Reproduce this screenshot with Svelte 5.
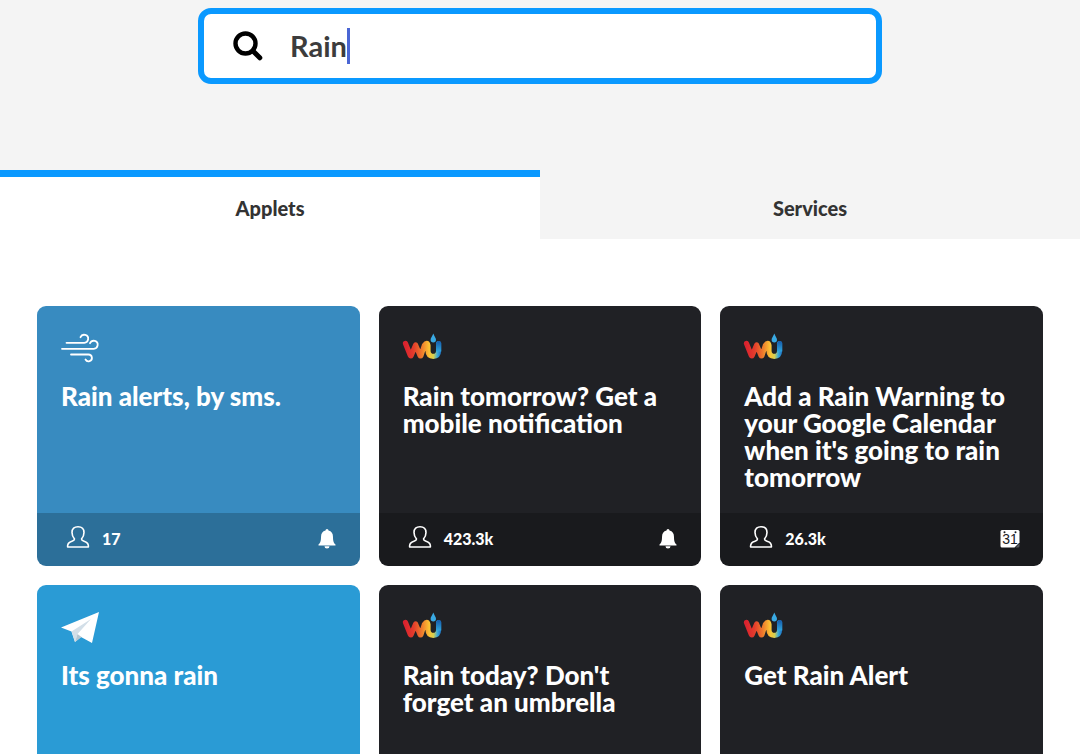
<script>
  let query = $state('Rain');
  let active = $state('Applets');
  const tabs = ['Applets', 'Services'];
  const applets = [
    { title: 'Rain alerts, by sms.', logo: 'wind', tone: 'steel', users: '17', action: 'bell' },
    { title: 'Rain tomorrow? Get a mobile notification', logo: 'wu', tone: 'dark', users: '423.3k', action: 'bell' },
    { title: "Add a Rain Warning to your Google Calendar when it's going to rain tomorrow", logo: 'wu', tone: 'dark', users: '26.3k', action: 'calendar' },
    { title: 'Its gonna rain', logo: 'plane', tone: 'sky' },
    { title: "Rain today? Don't forget an umbrella", logo: 'wu', tone: 'dark' },
    { title: 'Get Rain Alert', logo: 'wu', tone: 'dark' }
  ];
</script>

<header>
  <label class="search">
    <svg class="glass" viewBox="0 0 30 30" aria-hidden="true">
      <circle cx="12.5" cy="12.5" r="10" fill="none" stroke="#000" stroke-width="4.4" />
      <path d="M20 20l6.800 6.800" stroke="#000" stroke-width="5" stroke-linecap="round" />
    </svg>
    <input type="text" aria-label="Search" bind:value={query} />
    <span class="caret"></span>
  </label>
</header>

<nav>
  {#each tabs as tab}
    <button class:active={active === tab} onclick={() => (active = tab)}>{tab}</button>
  {/each}
</nav>

<main>
  {#each applets as applet, i}
    <article class={applet.tone}>
      <div class="body">
        {#if applet.logo === 'wind'}
          <svg class="logo" viewBox="0 0 39 28" fill="none" stroke="#fff" stroke-width="1.8" stroke-linecap="round" aria-hidden="true">
            <path d="M5.500 8.800H23a4 4 0 1 0-3.500-5.600" />
            <path d="M1 14.800H32.500a4 4 0 1 0-3.500-5.600" />
            <path d="M10 20.500H27.500a3.400 3.400 0 1 1-3 5" />
          </svg>
        {:else if applet.logo === 'plane'}
          <svg class="logo" viewBox="0 0 39 28" aria-hidden="true">
            <path d="M38 -1L0 14.500L10.500 18.500L14 29L20 24L31 30Z" fill="#fff" />
            <path d="M10.500 18.500L30 6L16.500 21L14 29Z" fill="#d3dfe8" />
            <path d="M16.500 21L20.500 24L14 29Z" fill="#b4c6d2" />
          </svg>
        {:else}
          <svg class="logo" viewBox="0 0 39 28" aria-hidden="true">
            <defs>
              <linearGradient id="warm{i}" gradientUnits="userSpaceOnUse" x1="1" y1="0" x2="38" y2="0">
                <stop offset="0" stop-color="#d9202f" />
                <stop offset=".25" stop-color="#e33b2c" />
                <stop offset=".48" stop-color="#ee7a2c" />
                <stop offset=".68" stop-color="#fbc234" />
                <stop offset=".8" stop-color="#d5cf50" />
                <stop offset=".9" stop-color="#3ba9d8" />
                <stop offset="1" stop-color="#1d72c4" />
              </linearGradient>
              <linearGradient id="cool{i}" x1="0" y1="0" x2="0" y2="1">
                <stop offset="0" stop-color="#1559a9" />
                <stop offset="1" stop-color="#2fa5dc" />
              </linearGradient>
            </defs>
            <path d="M2.500 9.500L7.300 21.500Q7.700 22.500 8.200 21.500L12.600 11L17 21.500Q17.500 22.500 18 21.500L21.300 11.500Q24.200 7 25 11.500V17Q25.200 22.300 30.300 22.300T35.600 17V9.500" fill="none" stroke="url(#warm{i})" stroke-width="5.200" stroke-linecap="round" stroke-linejoin="round" />
            <path d="M33 9.500a2.600 2.600 0 0 1 5.200 0v8h-5.200z" fill="url(#cool{i})" />
            <path d="M30.300 -.5C31.200 2.300 33 3.700 33 5.700a2.700 2.700 0 0 1-5.400 0C27.600 3.700 29.400 2.300 30.300 -.5Z" fill="#39a9e3" stroke="#202125" stroke-width="1.400" paint-order="stroke" />
          </svg>
        {/if}
        <h2>{applet.title}</h2>
      </div>
      <footer>
        {#if applet.users}
          <svg class="person" viewBox="0 0 24 24" fill="none" stroke="#fff" stroke-width="1.6" stroke-linejoin="round" aria-hidden="true">
            <path d="M8.500 14C6.700 12 6 10 6 7.500C6 3.700 8.300 1.700 12 1.700S18 3.700 18 7.500C18 10 17.300 12 15.500 14C15.500 15.700 16.700 15.800 18.700 16.400C21.700 17.300 22.700 18.500 22.400 22H1.600C1.300 18.500 2.300 17.300 5.300 16.400C7.300 15.800 8.500 15.700 8.500 14Z" />
          </svg>
          <span>{applet.users}</span>
          {#if applet.action === 'bell'}
            <svg class="action" viewBox="0 0 20 20" fill="#fff" aria-hidden="true">
              <path d="M10 0a1.500 1.500 0 0 1 1.500 1.500C14.500 2.100 16 4.500 16 8C16 12.500 17 14.500 18.500 15.500V16.500H1.500V15.500C3 14.500 4 12.500 4 8C4 4.500 5.500 2.100 8.500 1.500A1.500 1.500 0 0 1 10 0ZM7.500 17.300h5a2.500 2.200 0 0 1-5 0Z" />
            </svg>
          {:else}
            <svg class="action" viewBox="0 0 20 20" aria-hidden="true">
              <path d="M2 1H18Q19.500 1 19.500 2.500V13.500L14.500 18.500H2Q.5 18.500 .5 17V2.500Q.5 1 2 1Z" fill="#fff" />
              <circle cx="4.500" cy="3.200" r="1" fill="#1a1b1f" />
              <circle cx="15.500" cy="3.200" r="1" fill="#1a1b1f" />
              <path d="M15.500 18.500L19.500 14.500V17Q19.500 18.500 18 18.500Z" fill="#55565a" />
              <text class="date" x="10" y="15" text-anchor="middle">31</text>
            </svg>
          {/if}
        {/if}
      </footer>
    </article>
  {/each}
</main>

<style>
  :global(body) {
    background: #fff;
    font-family: Lato, sans-serif;
    overflow-x: hidden;
  }
  header {
    background: #f4f4f4;
    padding: 8px 24px 86px;
  }
  .search {
    box-sizing: border-box;
    display: flex;
    align-items: center;
    max-width: 684px;
    height: 76px;
    margin: 0 auto;
    padding: 0 29px;
    border: 6px solid #0a99ff;
    border-radius: 13px;
    background: #fff;
    cursor: text;
  }
  .glass {
    width: 30px;
    height: 30px;
    margin-right: 27px;
    flex: none;
  }
  input {
    field-sizing: content;
    min-width: 1px;
    max-width: 100%;
    padding: 0;
    border: 0;
    outline: 0;
    background: none;
    caret-color: transparent;
    color: #3c3c3c;
    font: 700 29px/36px Lato, sans-serif;
  }
  .caret {
    width: 3px;
    height: 36px;
    background: #4a66d4;
  }
  nav {
    display: grid;
    grid-template-columns: 1fr 1fr;
  }
  button {
    height: 69px;
    padding: 0 0 1px;
    border: 0;
    border-top: 7px solid #f4f4f4;
    background: #f4f4f4;
    color: #333;
    font: 900 20px/24px Lato, sans-serif;
    cursor: pointer;
  }
  button.active {
    border-color: #0a99ff;
    background: #fff;
  }
  main {
    display: grid;
    grid-template-columns: repeat(3, minmax(0, 1fr));
    gap: 19px;
    padding: 67px 37px;
  }
  article {
    display: flex;
    flex-direction: column;
    min-height: 260px;
    overflow: hidden;
    border-radius: 9px;
    color: #fff;
  }
  .steel { background: #388bc0; }
  .sky { background: #2a9bd5; }
  .dark { background: #202125; }
  .body {
    flex: 1;
    padding: 28px 24px 18px;
  }
  .logo {
    display: block;
    width: 39px;
    height: 28px;
    overflow: visible;
  }
  h2 {
    margin: 21px 0 0;
    font-size: 26px;
    line-height: 27px;
    font-weight: 900;
  }
  footer {
    box-sizing: border-box;
    display: flex;
    align-items: center;
    height: 53px;
    padding: 0 23px 1px 29px;
    background: rgb(0 0 0 / 20%);
    font-size: 16px;
    line-height: 20px;
    font-weight: 900;
  }
  .person {
    width: 24px;
    height: 24px;
    margin: 0 12px 4px 0;
  }
  .action {
    width: 20px;
    height: 20px;
    margin-left: auto;
  }
  .date {
    fill: #1a1b1f;
    font: 400 14px "Liberation Sans", sans-serif;
  }
</style>
